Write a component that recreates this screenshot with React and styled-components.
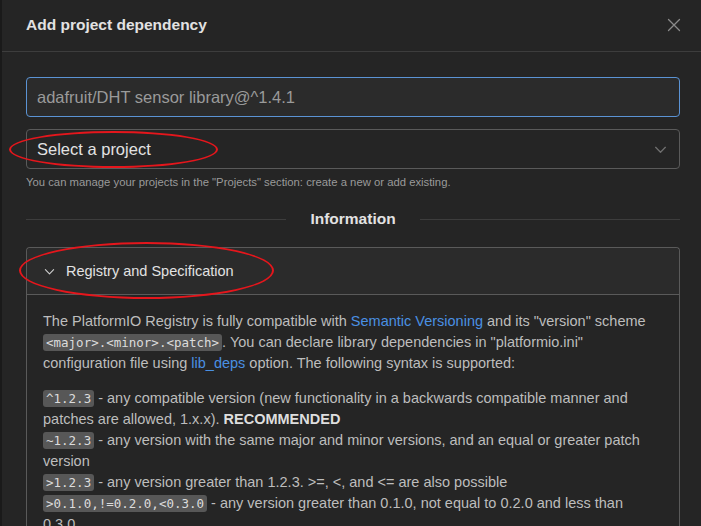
import React from 'react';
import styled, { createGlobalStyle } from 'styled-components';

const C = {
	PAGE: '#1a1a1a',
	DIALOG: '#252525',
	FIELD: '#2b2b2b',
	LINE: '#3d3d3d',
	BORDER: '#5a5a5a',
	FOCUS: '#5b93d4',
	TEXT: '#e2e2e2',
	BODY: '#bdbdbd',
	MUTED: '#9a9a9a',
	LINK: '#4a90e2',
	CODE_BG: '#575757',
	ANNOT: '#e5161c',
	FONT: '"Liberation Sans", Arial, sans-serif',
	MONO: '"DejaVu Sans Mono", "Liberation Mono", monospace',
};

const GlobalStyle = createGlobalStyle`
	html, body {
		margin: 0;
		padding: 0;
		background: ${C.PAGE};
		overflow: hidden;
	}
	body {
		font-family: ${C.FONT};
		-webkit-font-smoothing: antialiased;
	}
`;

const Page = styled.div`
	width: 701px;
	height: 526px;
	display: flex;
	overflow: hidden;
`;

const BackEdge = styled.div`
	width: 2px;
	flex: none;
	background: ${C.PAGE};
`;

const Dialog = styled.div`
	flex: 1;
	display: flex;
	flex-direction: column;
	background: ${C.DIALOG};
	color: ${C.TEXT};
`;

const Header = styled.div`
	height: 52px;
	flex: none;
	display: flex;
	align-items: center;
	justify-content: space-between;
	padding: 0 19px 2px 24px;
	box-sizing: border-box;
	border-bottom: 1px solid ${C.LINE};
`;

const Title = styled.h1`
	margin: 0;
	font-size: 15.5px;
	font-weight: 700;
	color: ${C.TEXT};
`;

const Close = styled.button`
	width: 16px;
	height: 16px;
	padding: 0;
	border: none;
	background: none;
	display: flex;
	align-items: center;
	justify-content: center;
`;

const Content = styled.div`
	padding: 25px 21px 0 24px;
	display: flex;
	flex-direction: column;
`;

const Input = styled.div`
	height: 40px;
	box-sizing: border-box;
	display: flex;
	align-items: center;
	padding: 0 10px;
	background: ${C.FIELD};
	border: 1px solid ${C.FOCUS};
	border-radius: 4px;
	font-size: 16.5px;
	color: ${C.MUTED};
`;

const Select = styled.div`
	position: relative;
	margin-top: 12px;
	height: 40px;
	box-sizing: border-box;
	display: flex;
	align-items: center;
	justify-content: space-between;
	padding: 0 12px 0 10px;
	border: 1px solid ${C.BORDER};
	border-radius: 4px;
	font-size: 16.5px;
	color: ${C.TEXT};
`;

const Help = styled.div`
	margin-top: 7px;
	font-size: 11.3px;
	color: ${C.MUTED};
`;

const Divider = styled.div`
	margin-top: 22px;
	display: flex;
	align-items: center;
	gap: 24px;

	&::before, &::after {
		content: '';
		flex: 1;
		height: 1px;
		background: ${C.LINE};
	}
`;

const DividerLabel = styled.span`
	font-size: 15.5px;
	font-weight: 700;
	color: ${C.TEXT};
`;

const Panel = styled.div`
	margin-top: 19px;
	border: 1px solid ${C.BORDER};
	border-bottom: none;
	border-radius: 4px 4px 0 0;
`;

const PanelHead = styled.div`
	position: relative;
	height: 46px;
	display: flex;
	align-items: center;
	gap: 11px;
	padding-left: 17px;
	background: ${C.FIELD};
	border-bottom: 1px solid ${C.BORDER};
	border-radius: 4px 4px 0 0;
	font-size: 14.5px;
	color: ${C.TEXT};
`;

const PanelBody = styled.div`
	padding: 16px 26px 20px 16px;
	font-size: 14.5px;
	line-height: 21px;
	color: ${C.BODY};
`;

const Para = styled.p`
	margin: 0 0 14px 0;
`;

const Link = styled.a`
	color: ${C.LINK};
	text-decoration: none;
`;

const Code = styled.code`
	font-family: ${C.MONO};
	font-size: 12.5px;
	line-height: 17px;
	background: ${C.CODE_BG};
	color: #dcdcdc;
	padding: 1px 3px;
	border-radius: 3px;
`;

const Strong = styled.b`
	color: #dedede;
`;

const Annotation = styled.span`
	position: absolute;
	left: ${p => p.$left}px;
	top: ${p => p.$top}px;
	width: ${p => p.$w}px;
	height: ${p => p.$h}px;
	border: 2px solid ${C.ANNOT};
	border-radius: 50%;
	box-sizing: border-box;
	pointer-events: none;
`;

const Chevron = ({ size = 12, color }) => (
	<svg width={size} height={size} viewBox="0 0 12 12" fill="none">
		<path d="M1.5 4l4.5 4.5L10.5 4" stroke={color} strokeWidth="1.2" strokeLinecap="round" strokeLinejoin="round" />
	</svg>
);

const App = () => {
	return (
		<>
			<GlobalStyle />
			<Page>
				<BackEdge />
				<Dialog>
					<Header>
						<Title>Add project dependency</Title>
						<Close aria-label="Close">
							<svg width="14" height="14" viewBox="0 0 14 14">
								<path d="M1.5 1.5l11 11M12.5 1.5l-11 11" stroke="#8a8a8a" strokeWidth="1.3" strokeLinecap="round" />
							</svg>
						</Close>
					</Header>

					<Content>
						<Input>adafruit/DHT sensor library@^1.4.1</Input>

						<Select>
							<span>Select a project</span>
							<Chevron size={13} color="#6f6f6f" />
							<Annotation $left={-18} $top={1} $w={209} $h={37} />
						</Select>
						<Help>You can manage your projects in the "Projects" section: create a new or add existing.</Help>

						<Divider>
							<DividerLabel>Information</DividerLabel>
						</Divider>

						<Panel>
							<PanelHead>
								<Chevron size={11} color="#cfcfcf" />
								<span>Registry and Specification</span>
								<Annotation $left={-8} $top={-6} $w={255} $h={57} />
							</PanelHead>
							<PanelBody>
								<Para>
									The PlatformIO Registry is fully compatible with <Link href="#">Semantic Versioning</Link> and its "version" scheme{' '}
									<Code>&lt;major&gt;.&lt;minor&gt;.&lt;patch&gt;</Code>. You can declare library dependencies in "platformio.ini"
									configuration file using <Link href="#">lib_deps</Link> option. The following syntax is supported:
								</Para>
								<div>
									<Code>^1.2.3</Code> - any compatible version (new functionality in a backwards compatible manner and
									patches are allowed, 1.x.x). <Strong>RECOMMENDED</Strong>
								</div>
								<div>
									<Code>~1.2.3</Code> - any version with the same major and minor versions, and an equal or greater patch version
								</div>
								<div>
									<Code>&gt;1.2.3</Code> - any version greater than 1.2.3. &gt;=, &lt;, and &lt;= are also possible
								</div>
								<div>
									<Code>&gt;0.1.0,!=0.2.0,&lt;0.3.0</Code> - any version greater than 0.1.0, not equal to 0.2.0 and less than 0.3.0
								</div>
							</PanelBody>
						</Panel>
					</Content>
				</Dialog>
			</Page>
		</>
	);
};

export default App;
